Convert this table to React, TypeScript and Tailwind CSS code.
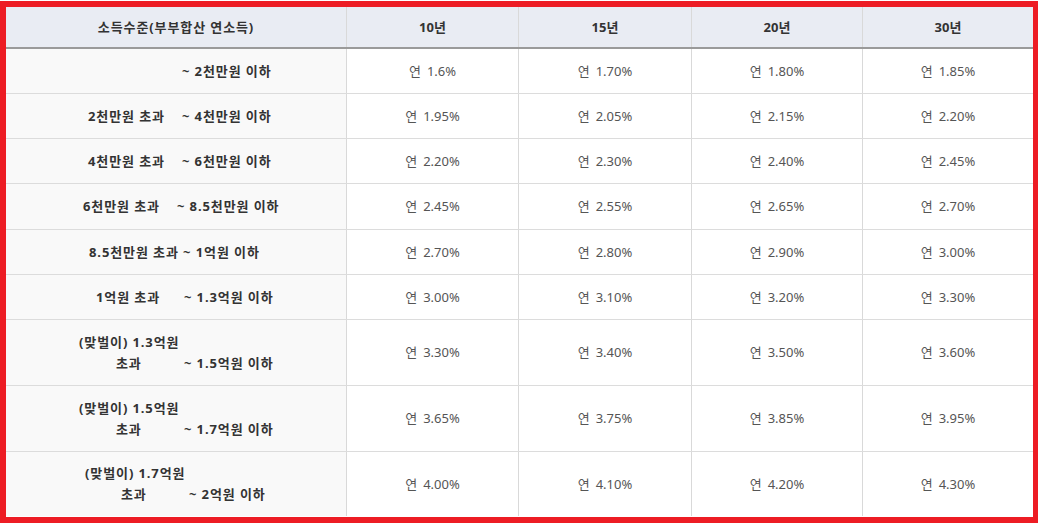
import React from "react";

const font = { fontFamily: '"Noto Sans", "Noto Sans CJK KR", sans-serif' };

type Row = {
  h: string;
  label: React.ReactNode;
  vals: string[];
};

const rows: Row[] = [
  {
    h: "h-[45px]",
    label: (
      <div className="flex pl-[176px]">
        <span>~ 2천만원 이하</span>
      </div>
    ),
    vals: ["1.6%", "1.70%", "1.80%", "1.85%"],
  },
  {
    h: "h-[45px]",
    label: (
      <div className="flex pl-[82px]">
        <span className="w-[94px]">2천만원 초과</span>
        <span>~ 4천만원 이하</span>
      </div>
    ),
    vals: ["1.95%", "2.05%", "2.15%", "2.20%"],
  },
  {
    h: "h-[45px]",
    label: (
      <div className="flex pl-[82px]">
        <span className="w-[94px]">4천만원 초과</span>
        <span>~ 6천만원 이하</span>
      </div>
    ),
    vals: ["2.20%", "2.30%", "2.40%", "2.45%"],
  },
  {
    h: "h-[46px]",
    label: (
      <div className="flex pl-[77px]">
        <span className="w-[94px]">6천만원 초과</span>
        <span>~ 8.5천만원 이하</span>
      </div>
    ),
    vals: ["2.45%", "2.55%", "2.65%", "2.70%"],
  },
  {
    h: "h-[45px]",
    label: (
      <div className="flex pl-[83px]">
        <span>8.5천만원 초과 ~ 1억원 이하</span>
      </div>
    ),
    vals: ["2.70%", "2.80%", "2.90%", "3.00%"],
  },
  {
    h: "h-[45px]",
    label: (
      <div className="flex pl-[90px]">
        <span className="w-[88px]">1억원 초과</span>
        <span>~ 1.3억원 이하</span>
      </div>
    ),
    vals: ["3.00%", "3.10%", "3.20%", "3.30%"],
  },
  {
    h: "h-[66px]",
    label: (
      <div className="flex flex-col">
        <div className="pl-[73px]">(맞벌이) 1.3억원</div>
        <div className="flex pl-[110px]">
          <span className="w-[68px]">초과</span>
          <span>~ 1.5억원 이하</span>
        </div>
      </div>
    ),
    vals: ["3.30%", "3.40%", "3.50%", "3.60%"],
  },
  {
    h: "h-[66px]",
    label: (
      <div className="flex flex-col">
        <div className="pl-[73px]">(맞벌이) 1.5억원</div>
        <div className="flex pl-[110px]">
          <span className="w-[68px]">초과</span>
          <span>~ 1.7억원 이하</span>
        </div>
      </div>
    ),
    vals: ["3.65%", "3.75%", "3.85%", "3.95%"],
  },
  {
    h: "h-[64px]",
    label: (
      <div className="flex flex-col">
        <div className="pl-[79px]">(맞벌이) 1.7억원</div>
        <div className="flex pl-[115px]">
          <span className="w-[68px]">초과</span>
          <span>~ 2억원 이하</span>
        </div>
      </div>
    ),
    vals: ["4.00%", "4.10%", "4.20%", "4.30%"],
  },
];

const widths = ["w-[172px]", "w-[173px]", "w-[171px]", "w-[170px]"];
const heads = ["10년", "15년", "20년", "30년"];

export default function App() {
  return (
    <div className="w-[1040px] h-[523px] bg-white" style={font}>
      <div className="mt-px w-[1038px] h-[522px] border-l-[6px] border-t-[6px] border-r-[5px] border-b-[6px] border-[#ed1c24] bg-white flex flex-col text-[13px] leading-[21px]">
        {/* header */}
        <div className="flex h-[42px] bg-[#e9ecf3] border-b-2 border-[#9a9a9a] font-bold text-[#333]">
          <div className="w-[341px] flex items-center justify-center border-r border-[#d9d9d9] tracking-[0.9px]">
            소득수준(부부합산 연소득)
          </div>
          {heads.map((h, i) => (
            <div
              key={h}
              className={`${widths[i]} flex items-center justify-center ${i < 3 ? "border-r border-[#d9d9d9]" : ""}`}
            >
              {h}
            </div>
          ))}
        </div>
        {rows.map((r, ri) => (
          <div
            key={ri}
            className={`flex ${r.h} ${ri < rows.length - 1 ? "border-b border-[#dcdcdc]" : ""}`}
          >
            <div className="w-[341px] flex items-center bg-[#f9f9f9] border-r border-[#d9d9d9] font-bold text-[#333] tracking-[0.9px]">
              {r.label}
            </div>
            {r.vals.map((v, i) => (
              <div
                key={i}
                className={`${widths[i]} flex items-center justify-center text-[#555] ${i < 3 ? "border-r border-[#d9d9d9]" : ""}`}
              >
                <span className="mr-[6px]">연</span>
                <span>{v}</span>
              </div>
            ))}
          </div>
        ))}
      </div>
    </div>
  );
}
